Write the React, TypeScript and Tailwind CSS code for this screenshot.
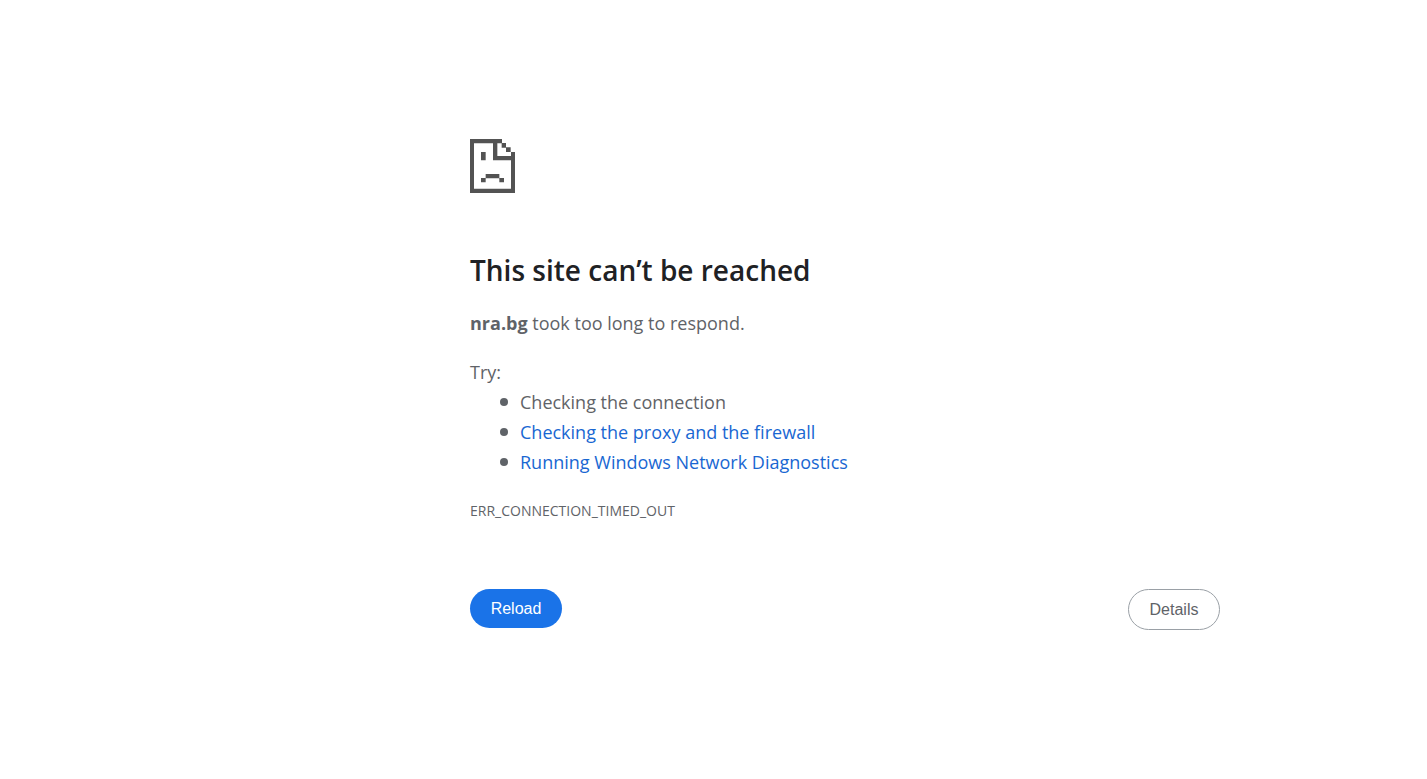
const suggestions = [
  { text: "Checking the connection" },
  { text: "Checking the proxy and the firewall", href: "#proxy" },
  { text: "Running Windows Network Diagnostics", href: "#diagnostics" }
];

function SadPageIcon() {
  return (
    <svg
      className="w-[45px] h-[54px] text-[#535353]"
      viewBox="0 0 135 162"
      fill="currentColor"
      aria-hidden="true"
    >
      {/* Page outline and folded corner */}
      <path d="M0 0H96V13H82V51H123V39H135V162H0V0ZM12 13V149H123V64H69V13Z" fillRule="evenodd" />
      <path d="M95 12H108V26H95ZM108 25H122V39H108Z" />
      {/* Face */}
      <path d="M33 39H47V64H33ZM47 105H88V118H47ZM33 117H47V130H33ZM88 117H102V130H88Z" />
    </svg>
  );
}

export default function App() {
  return (
    <main className="ml-[470px] mr-6 max-w-[750px] pt-[139px] font-['Open_Sans',sans-serif] text-lg leading-[30px] text-[#5f6368]">
      <SadPageIcon />

      <h1 className="mt-[54px] text-[28px] leading-[46px] font-semibold text-[#202124]">
        This site can’t be reached
      </h1>
      <p className="mt-[15px]">
        <strong>nra.bg</strong> took too long to respond.
      </p>

      <div className="mt-[19px]">
        <p>Try:</p>
        <ul className="pl-[30px]">
          {suggestions.map((s) => (
            <li
              key={s.text}
              className="flex items-center gap-3 before:size-2 before:rounded-full before:bg-[#5f6368] before:content-['']"
            >
              {s.href ? <a href={s.href} className="text-[#1967d2]">{s.text}</a> : s.text}
            </li>
          ))}
        </ul>
      </div>

      <p className="mt-[19px] text-sm leading-[30px]">ERR_CONNECTION_TIMED_OUT</p>

      <div className="mt-[63px] flex items-start justify-between font-['Liberation_Sans',sans-serif] text-base leading-[23px]">
        <button type="button" className="min-w-[92px] rounded-full bg-[#1a73e8] px-5 py-2 text-white">
          Reload
        </button>
        <button type="button" className="min-w-[92px] rounded-full border border-[#9aa0a6] px-5 py-2 text-[#5f6368]">
          Details
        </button>
      </div>
    </main>
  );
}
